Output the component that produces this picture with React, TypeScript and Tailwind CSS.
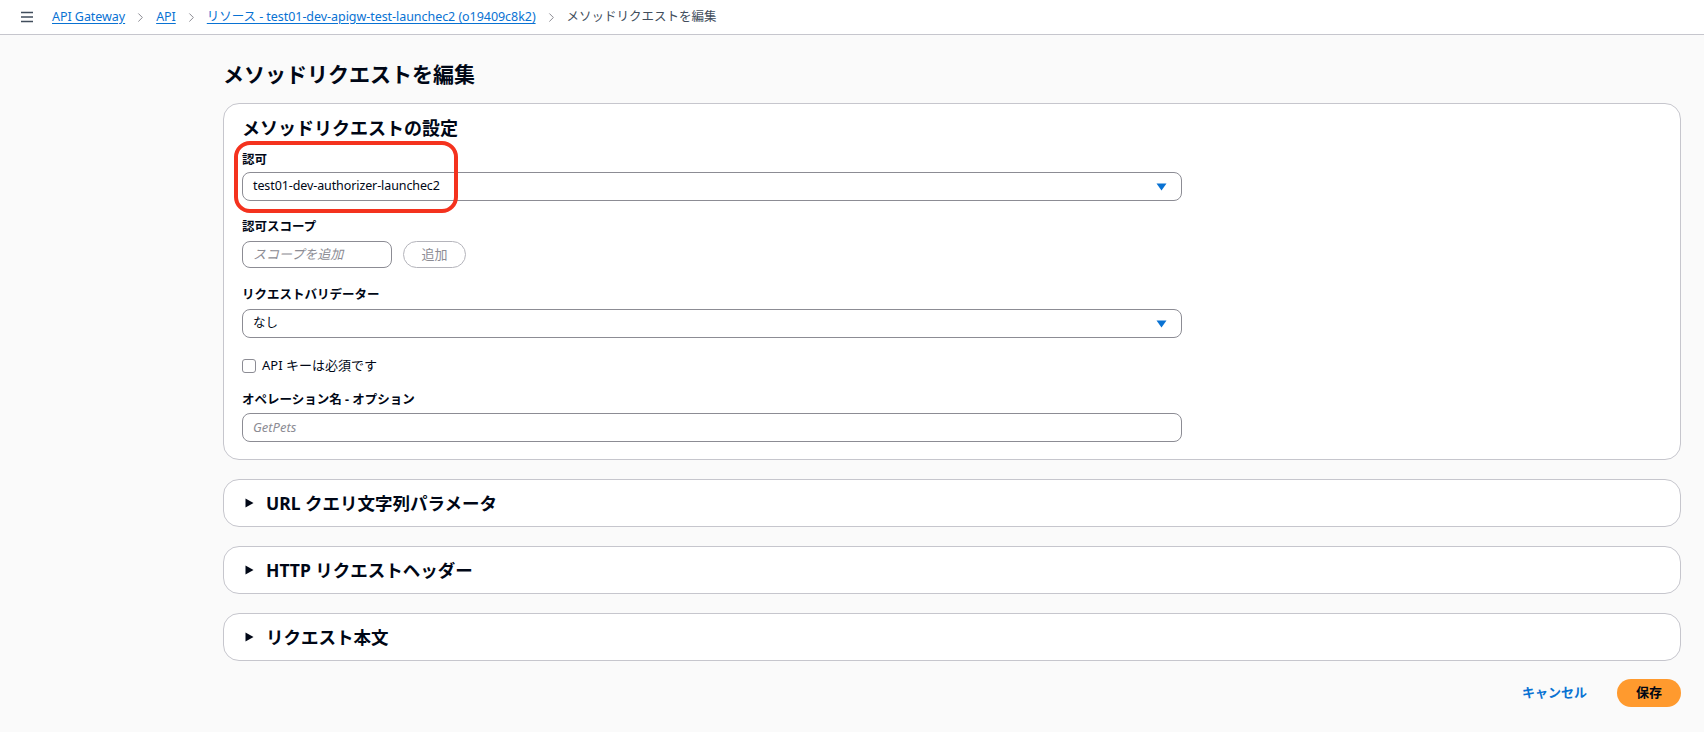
import { ChevronRight } from "lucide-react";

const FONT = "font-['Noto_Sans','Noto_Sans_CJK_JP',sans-serif]";

function Crumbs() {
  const links = ["API Gateway", "API", "リソース - test01-dev-apigw-test-launchec2 (o19409c8k2)"];
  return (
    <header className="flex h-[35px] items-center border-b border-[#c6c6cd] bg-white pl-[20px]">
      <svg width="14" height="12" viewBox="0 0 14 12" className="mr-[18px] text-[#414d5c]">
        <path d="M1 1.5h12M1 6h12M1 10.5h12" stroke="currentColor" strokeWidth="1.6" />
      </svg>
      {links.map((l) => (
        <div key={l} className="flex items-center">
          <a className="text-[12.5px] leading-[18px] tracking-[-0.05px] text-[#0972d3] underline underline-offset-2">{l}</a>
          <ChevronRight size={15} strokeWidth={1.6} className="mx-[8px] text-[#8c8c94]" />
        </div>
      ))}
      <span className="text-[12.5px] leading-[18px] text-[#414d5c]">メソッドリクエストを編集</span>
    </header>
  );
}

function Label({ children, className = "" }: { children: React.ReactNode; className?: string }) {
  return <div className={`text-[12.5px] font-bold leading-[18px] text-[#000716] ${className}`}>{children}</div>;
}

function Select({ value, className = "" }: { value: string; className?: string }) {
  return (
    <div
      className={`flex h-[29px] w-[940px] items-center justify-between rounded-[8px] border border-[#8c8c94] bg-white pl-[10px] pr-[14px] ${className}`}
    >
      <span className="text-[12.5px] tracking-[-0.1px] text-[#000716]">{value}</span>
      <svg width="11" height="8" viewBox="0 0 11 8">
        <path d="M0.5 0.5h10L5.5 7.5z" fill="#0972d3" />
      </svg>
    </div>
  );
}

function Section({ title }: { title: string }) {
  return (
    <div className="flex h-[48px] items-center rounded-[16px] border border-[#c6c6cd] bg-white pl-[21px]">
      <svg width="9" height="10" viewBox="0 0 9 10" className="mr-[12px]">
        <path d="M0.5 0.5L8.5 5L0.5 9.5z" fill="#000716" />
      </svg>
      <span className="text-[17.5px] font-bold text-[#000716]">{title}</span>
    </div>
  );
}

export default function App() {
  return (
    <div className={`min-h-screen bg-[#fafafa] ${FONT}`}>
      <Crumbs />
      <main className="pl-[223px] pr-[23px]">
        <h1 className="mt-[25px] text-[21px] font-bold leading-[28px] text-[#000716]">メソッドリクエストを編集</h1>

        <div className="relative mt-[15px] rounded-[16px] border border-[#c6c6cd] bg-white px-[18px] pb-[17px] pt-[12px]">
          <h2 className="text-[18px] font-bold leading-[24px] text-[#000716]">メソッドリクエストの設定</h2>

          <Label className="mt-[11px]">認可</Label>
          <Select value="test01-dev-authorizer-launchec2" className="mt-[3px]" />

          <Label className="mt-[17px]">認可スコープ</Label>
          <div className="mt-[5px] flex items-center gap-[11px]">
            <div className="flex h-[27px] w-[150px] items-center rounded-[8px] border border-[#8c8c94] bg-white pl-[10px]">
              <span className="text-[13px] italic text-[#8c8c94]">スコープを追加</span>
            </div>
            <button className="flex h-[27px] w-[63px] items-center justify-center rounded-full border border-[#b4b4bb] bg-white text-[13px] text-[#8c8c94]">
              追加
            </button>
          </div>

          <Label className="mt-[18px]">リクエストバリデーター</Label>
          <Select value="なし" className="mt-[5px]" />

          <div className="mt-[19px] flex h-[18px] items-center">
            <div className="h-[14px] w-[14px] rounded-[3px] border border-[#8c8c94] bg-white" />
            <span className="ml-[6px] text-[13px] text-[#000716]">API キーは必須です</span>
          </div>

          <Label className="mt-[16px]">オペレーション名 - オプション</Label>
          <div className="mt-[4px] flex h-[29px] w-[940px] items-center rounded-[8px] border border-[#8c8c94] bg-white pl-[10px]">
            <span className="text-[13px] italic text-[#8c8c94]">GetPets</span>
          </div>

          {/* 赤枠 */}
          <div className="pointer-events-none absolute left-[10px] top-[37px] h-[72px] w-[224px] rounded-[16px] border-4 border-[#f4321e]" />
        </div>

        <div className="mt-[19px] flex flex-col gap-[19px]">
          <Section title="URL クエリ文字列パラメータ" />
          <Section title="HTTP リクエストヘッダー" />
          <Section title="リクエスト本文" />
        </div>

        <div className="mt-[18px] flex items-center justify-end gap-[30px]">
          <button className="text-[13px] font-bold text-[#0972d3]">キャンセル</button>
          <button className="flex h-[28px] w-[64px] items-center justify-center rounded-full bg-[#ff9a2e] text-[13px] font-bold text-[#000716]">
            保存
          </button>
        </div>
      </main>
    </div>
  );
}
